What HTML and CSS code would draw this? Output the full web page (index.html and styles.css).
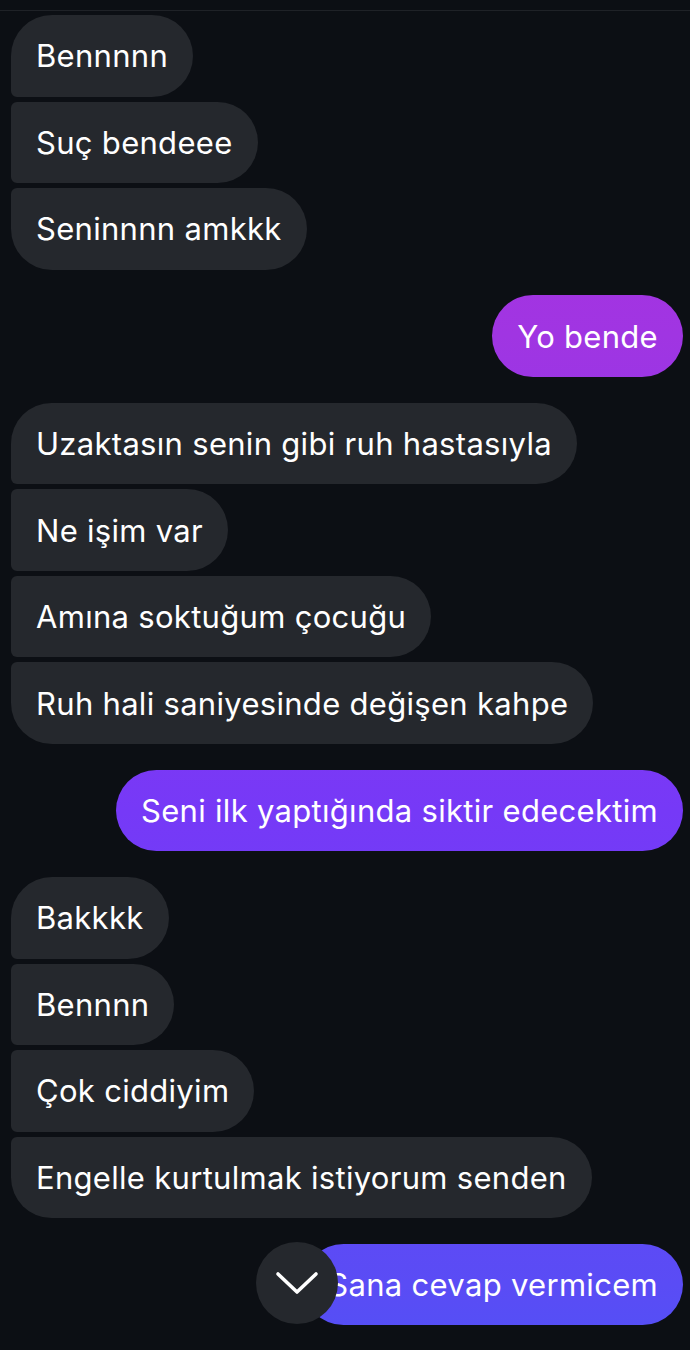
FILE: index.html
```html
<!DOCTYPE html>
<html lang="tr">
<head>
    <meta charset="UTF-8">
    <meta name="viewport" content="width=device-width, initial-scale=1.0">
    <title>Sohbet</title>
    <link rel="stylesheet" href="styles.css">
</head>
<body>
    <div class="chat">
        <div class="group in">
            <div class="msg">Bennnnn</div>
            <div class="msg">Suç bendeee</div>
            <div class="msg">Seninnnn amkkk</div>
        </div>
        <div class="group out">
            <div class="msg">Yo bende</div>
        </div>
        <div class="group in">
            <div class="msg">Uzaktasın senin gibi ruh hastasıyla</div>
            <div class="msg">Ne işim var</div>
            <div class="msg">Amına soktuğum çocuğu</div>
            <div class="msg">Ruh hali saniyesinde değişen kahpe</div>
        </div>
        <div class="group out">
            <div class="msg">Seni ilk yaptığında siktir edecektim</div>
        </div>
        <div class="group in">
            <div class="msg">Bakkkk</div>
            <div class="msg">Bennnn</div>
            <div class="msg">Çok ciddiyim</div>
            <div class="msg">Engelle kurtulmak istiyorum senden</div>
        </div>
        <div class="group out last">
            <div class="msg">Sana cevap vermicem</div>
            <!-- aşağı kaydır butonu -->
            <button class="scroll-down" aria-label="Aşağı kaydır">
                <svg width="44" height="28" viewBox="0 0 44 28">
                    <path d="M3 4 L22 22 L41 4" fill="none" stroke="#fff" stroke-width="3.6" stroke-linecap="round" stroke-linejoin="round"/>
                </svg>
            </button>
        </div>
    </div>
</body>
</html>
```

FILE: styles.css
```css
body {
    margin: 0;
    padding: 0;
    background-color: #0c0f14;
    font-family: Inter, "Noto Sans", sans-serif;
    color: #fff;
}

.chat {
    border-top: 1px solid #1f2227;
    margin-top: 10px;
    padding: 4px 7px 0 11px;
    display: flex;
    flex-direction: column;
    gap: 25.9px;
}

.group {
    display: flex;
    flex-direction: column;
    gap: 5px;
}

.group.in {
    align-items: flex-start;
}

.group.out {
    align-items: flex-end;
}

.group.last {
    position: relative;
}

.msg {
    box-sizing: border-box;
    height: 81.5px;
    padding: 0 25px;
    display: flex;
    align-items: center;
    font-size: 31px;
    letter-spacing: 0.3px;
    border-radius: 41px;
    white-space: nowrap;
}

.in .msg {
    background-color: #25282d;
}

.in .msg:not(:first-child) {
    border-top-left-radius: 6px;
}

.in .msg:not(:last-child) {
    border-bottom-left-radius: 6px;
}

.out .msg {
    background-image: linear-gradient(to bottom, #b02fe0 0px, #a035e2 336px, #7639f7 810px, #5a4cf5 1284px, #5350f5 1350px);
    background-attachment: fixed;
}

.scroll-down {
    position: absolute;
    left: 245px;
    top: -2px;
    width: 82px;
    height: 82px;
    border: none;
    border-radius: 50%;
    background-color: #25282d;
    padding: 0;
    display: flex;
    justify-content: center;
    align-items: center;
    cursor: pointer;
}

.scroll-down svg {
    margin-top: 2px;
}
```
